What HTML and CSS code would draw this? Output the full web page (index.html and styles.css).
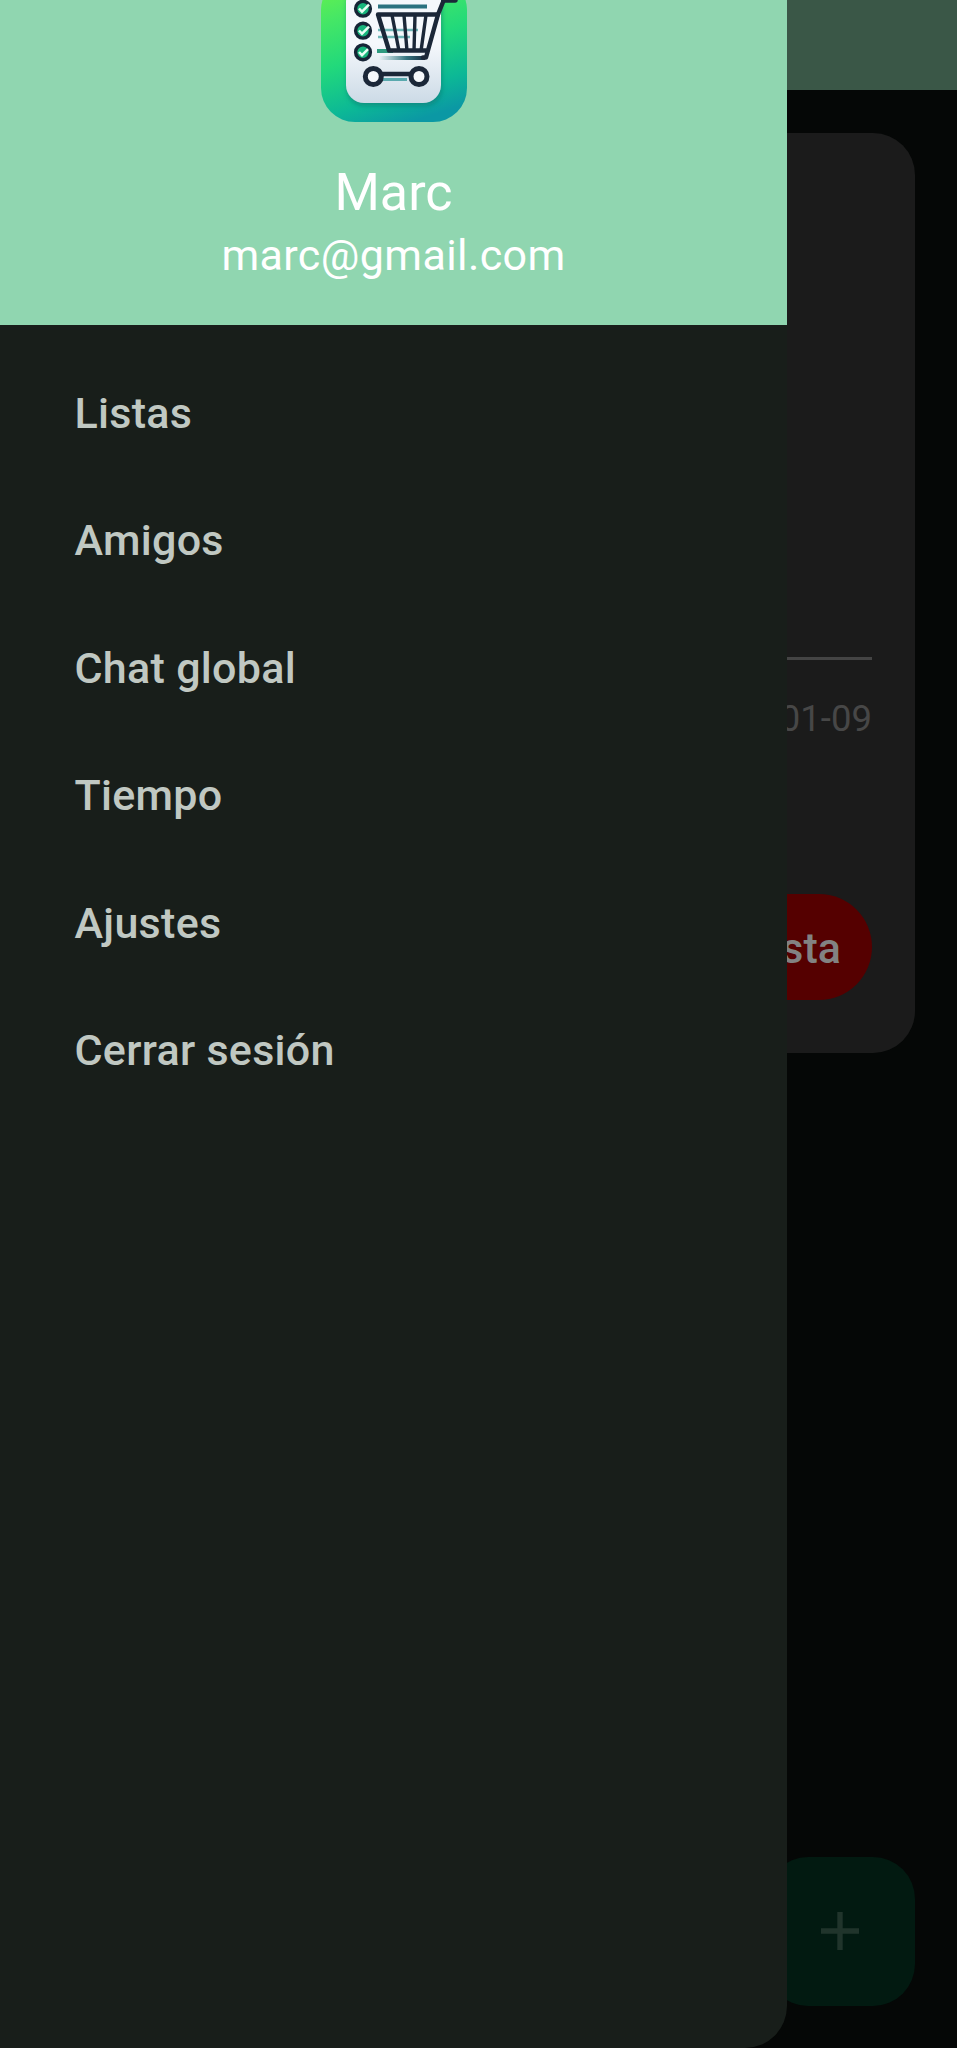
FILE: index.html
```html
<!DOCTYPE html>
<html lang="es">
<head>
<meta charset="utf-8">
<title>Listas</title>
<link rel="stylesheet" href="styles.css">
</head>
<body>
<div class="screen">
  <main class="page">
    <div class="appbar"></div>
    <section class="card">
      <hr class="divider">
      <p class="date">01-09</p>
      <button class="delete">lista</button>
    </section>
    <button class="fab" aria-label="Añadir">
      <svg class="plus" viewBox="0 0 38 38"><path d="M19 0v38M0 19h38" stroke="#20342b" stroke-width="5.4"/></svg>
    </button>
  </main>
  <aside class="drawer">
    <header class="profile">
      <svg class="logo" viewBox="0 0 146 146">
        <defs>
          <linearGradient id="tile" x1="0.3" y1="0" x2="0.62" y2="1">
            <stop offset="0" stop-color="#62f04f"/>
            <stop offset=".2" stop-color="#46e765"/>
            <stop offset=".5" stop-color="#22d97b"/>
            <stop offset=".8" stop-color="#0cb896"/>
            <stop offset="1" stop-color="#0b98a4"/>
          </linearGradient>
          <linearGradient id="sheet" x1="0" y1="0" x2="0" y2="1">
            <stop offset=".5" stop-color="#f5f8fc"/>
            <stop offset="1" stop-color="#ccdae6"/>
          </linearGradient>
          <linearGradient id="fade" x1="0" y1="0" x2="1" y2="0">
            <stop offset="0" stop-color="#3f8f91" stop-opacity="0"/>
            <stop offset=".6" stop-color="#347480"/>
            <stop offset="1" stop-color="#172c40"/>
          </linearGradient>
          <filter id="soft" x="-20%" y="-20%" width="140%" height="140%"><feGaussianBlur stdDeviation="2.5"/></filter>
        </defs>
        <rect width="146" height="146" rx="34" fill="url(#tile)"/>
        <rect x="26" y="12" width="95" height="118" rx="17" fill="#087a72" opacity=".6" filter="url(#soft)"/>
        <rect x="25" y="8" width="95" height="119" rx="18" fill="url(#sheet)"/>
        <rect x="57" y="28.500" width="49" height="4" fill="#2b7280"/>
        <path d="M57 54h40M57 61h32" stroke="#6fb8b8" stroke-width="2.500"/>
        <rect x="56" y="73" width="16" height="4" fill="#2e9b80"/>
        <rect x="58" y="80" width="46" height="4" fill="url(#fade)"/>
        <path d="M60 103.500h26" stroke="#5aa9ae" stroke-width="3"/>
        <g stroke="#172537" stroke-width="3.400" fill="#18b57c">
          <circle cx="42" cy="32.700" r="7.400"/><circle cx="42" cy="54.700" r="7.400"/><circle cx="42" cy="76.300" r="7.400"/>
        </g>
        <path d="M38 32.500l3 3.200 7-7M38 54.500l3 3.200 7-7M38 76l3 3.200 6-6" fill="none" stroke="#e8fff4" stroke-width="2.500"/>
        <path d="M71 39l7 36M83 39l3 36M94 39l-1 36M105 39l-5 36" stroke="#1b2738" stroke-width="3.400"/>
        <g fill="none" stroke="#1b2738" stroke-width="4.400" stroke-linejoin="round" stroke-linecap="round">
          <path d="M117 38.500H57l11 36h37"/>
          <path d="M133 23.500h-10l-6 15-12 43h-3"/>
          <path d="M62 98h27"/>
        </g>
        <path d="M123 24h11" stroke="#1b2738" stroke-width="5.500" stroke-linecap="round"/>
        <g fill="#f5f8fb" stroke="#1b2738" stroke-width="5">
          <circle cx="52.300" cy="100.500" r="8"/><circle cx="98" cy="100.500" r="8"/>
        </g>
      </svg>
      <h1 class="name">Marc</h1>
      <p class="email">marc@gmail.com</p>
    </header>
    <nav class="menu">
      <a class="item">Listas</a>
      <a class="item">Amigos</a>
      <a class="item">Chat global</a>
      <a class="item">Tiempo</a>
      <a class="item">Ajustes</a>
      <a class="item">Cerrar sesión</a>
    </nav>
  </aside>
</div>
</body>
</html>
```
FILE: styles.css
```css
* { box-sizing: border-box; }
body { margin: 0; font-family: Roboto, sans-serif; }
h1, p, hr, button { margin: 0; border: 0; padding: 0; font: inherit; }

.screen {
  position: relative;
  width: 957px;
  height: 2048px;
  overflow: hidden;
  background: #050706;
}

.page { display: flex; flex-direction: column; height: 100%; }
.appbar { flex: none; height: 90px; background: #3a5747; }

.card {
  display: flex;
  flex-direction: column;
  align-items: flex-end;
  height: 920.500px;
  margin: 42.500px 42.500px 0;
  padding: 524.500px 42.500px 0;
  border-radius: 42px;
  background: #1b1b1b;
}
.divider { width: 100%; height: 3px; background: #444; }
.date {
  margin-top: 36.500px;
  font-size: 36.500px;
  line-height: 44px;
  color: #474747;
}
.delete {
  height: 106px;
  margin-top: 153px;
  padding: 3px 31px 0 64px;
  border-radius: 53px;
  background: #550000;
  color: #828282;
  font-size: 43px;
  font-weight: 500;
}

.fab {
  display: grid;
  place-items: center;
  width: 149px;
  height: 149px;
  margin: auto 42.500px 42.500px auto;
  border-radius: 42px;
  background: #021a11;
}
.plus { width: 38px; height: 38px; }

.drawer {
  position: absolute;
  inset: 0 auto 0 0;
  width: 787px;
  overflow: hidden;
  border-radius: 0 0 42px 0;
  background: #181e1a;
}
.profile {
  display: flex;
  flex-direction: column;
  align-items: center;
  justify-content: flex-end;
  height: 325px;
  padding-bottom: 39.500px;
  background: #90d6b0;
  color: #fff;
}
.logo { flex: none; width: 146px; height: 146px; }
.name { margin-top: 39.500px; font-size: 52px; line-height: 62px; font-weight: 400; }
.email { font-size: 43px; line-height: 62px; letter-spacing: .4px; }

.menu { display: flex; flex-direction: column; padding: 24.500px 74.500px; }
.item {
  height: 127.600px;
  line-height: 127.600px;
  color: #c0c8c2;
  font-size: 43px;
  font-weight: 500;
  letter-spacing: .3px;
}
```
